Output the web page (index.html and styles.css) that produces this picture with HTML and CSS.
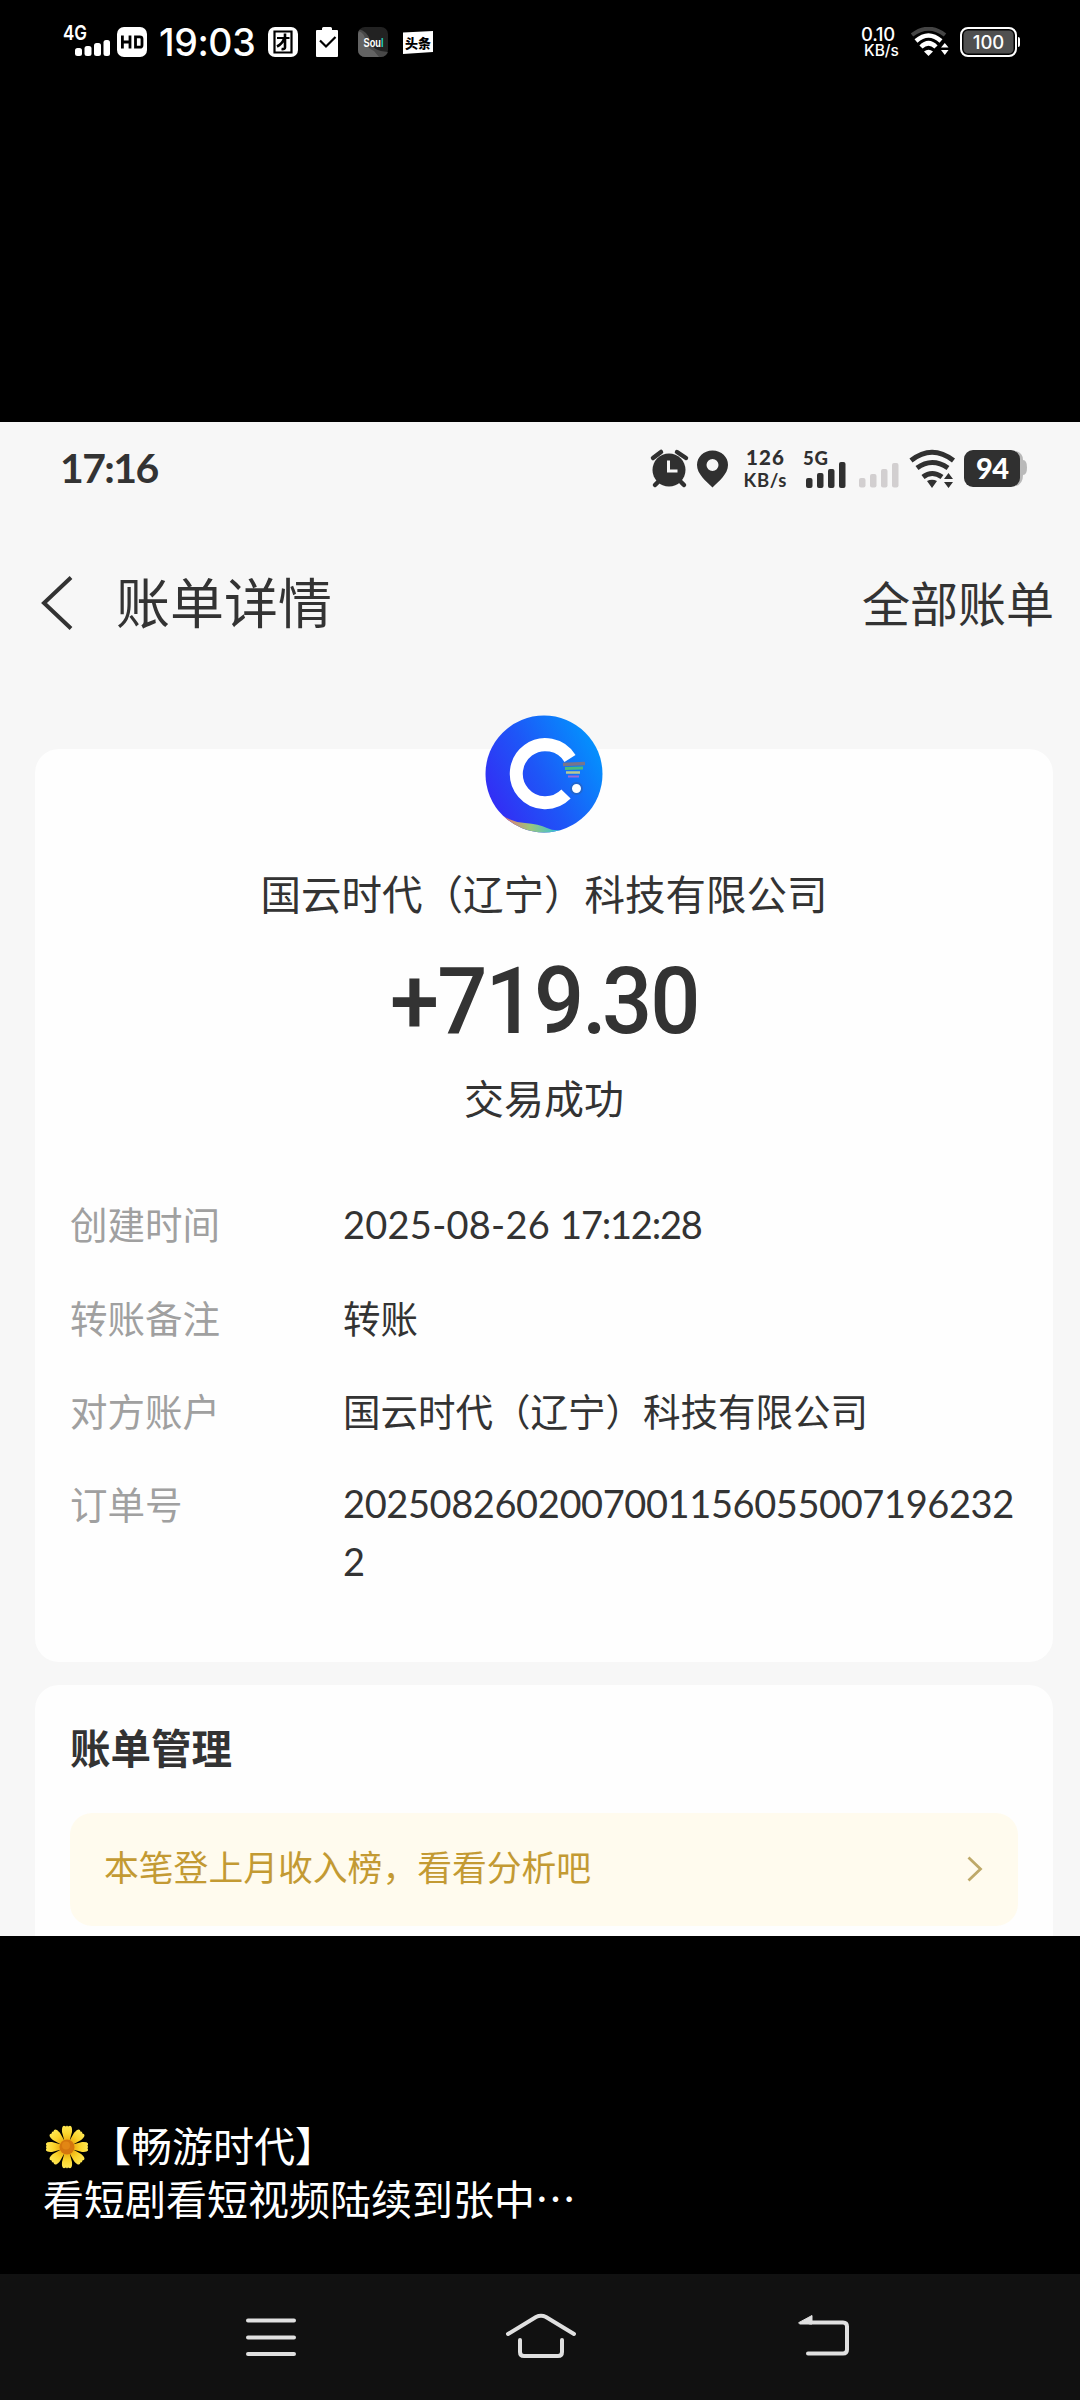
FILE: index.html
```html
<!DOCTYPE html>
<html lang="zh-CN">
<head>
<meta charset="utf-8">
<title>账单详情</title>
<link rel="stylesheet" href="styles.css">
</head>
<body>
<header class="status">
  <svg class="s-signal" width="50" height="40" viewBox="0 -4 50 40" fill="#fff">
    <text class="s-net" x="0" y="17" textLength="24" lengthAdjust="spacingAndGlyphs">4G</text>
    <rect x="12" y="25" width="7" height="8" rx="2.5"/><rect x="21.500" y="23" width="7" height="10" rx="2.500"/><rect x="31" y="20" width="7" height="13" rx="2.500"/><rect x="40.500" y="17" width="6.500" height="16" rx="2.500"/>
  </svg>
  <svg class="s-hd" width="30" height="30" viewBox="0 0 30 30"><rect width="30" height="30" rx="7" fill="#fff"/><g fill="none" stroke="#000" stroke-width="2.800"><path d="M5.400 8.500v13M13 8.500v13M5.400 15H13M18.500 9.800h4.300q2.200 0 2.200 2v6.400q0 2-2.200 2h-4.300z"/></g></svg>
  <span class="s-time">19:03</span>
  <svg class="s-tuan" width="30" height="30" viewBox="0 0 30 30"><rect width="30" height="30" rx="7" fill="#fff"/><g fill="none" stroke="#000" stroke-width="2.200"><path d="M6.500 4.500h17v21h-17zM9 11h12.500"/><path d="M17 6.500V20.500q0 2-3.500 1.500M16 12Q14 17 9 19.500" stroke-width="2.600"/></g></svg>
  <svg class="s-clip" width="22" height="30" viewBox="0 0 22 30"><path d="M1 3h5V1.500Q6 0 7.500 0h7Q16 0 16 1.500V3h5q1 0 1 1v25q0 1-1 1H1q-1 0-1-1V4q0-1 1-1z" fill="#fff"/><path d="M4 13.500l6 6 9.500-9.500" fill="none" stroke="#000" stroke-width="2.200"/></svg>
  <svg class="s-soul" width="30" height="30" viewBox="0 0 30 30">
    <defs><clipPath id="soul"><rect width="30" height="30" rx="7"/></clipPath></defs>
    <g clip-path="url(#soul)"><rect width="30" height="30" fill="#222"/><path d="M0 2Q10 4 12 14T30 25v5H0z" fill="#484848"/><path d="M0 4q7 2 7 9T16 24l5 6H0z" fill="#777" opacity=".6"/></g>
    <text class="s-soultext" x="5.500" y="20" fill="#fff" textLength="20" lengthAdjust="spacingAndGlyphs">Sou<tspan fill="#24dcc0">l</tspan></text>
  </svg>
  <svg class="s-toutiao" width="30" height="23" viewBox="0 0 30 23"><path d="M0 1.500L30 0v21L0 23z" fill="#fff"/><text class="s-tttext" x="2" y="17">头条</text></svg>
  <span class="s-rate"><span>0.10</span><span class="s-unit">KB/s</span></span>
  <svg class="s-wifi" width="38" height="30" viewBox="0 0 38 30" fill="none" stroke="#fff">
    <path d="M1 8Q17.500-4.500 34 8" stroke="#444" stroke-width="4"/>
    <path d="M5 14Q17.500 3 30 14" stroke-width="4.500"/><path d="M10 20Q17.500 12.500 25 20" stroke-width="4.500"/>
    <path d="M13 24.500Q17.500 21 22 24.500L17.500 29z" fill="#fff" stroke="none"/><path d="M30 20.500h7.500L33.800 16zM30 23h7.500l-3.700 5z" fill="#fff" stroke="none"/>
  </svg>
  <span class="s-batt">100</span><i class="s-nub"></i>
</header>

<main class="shot">
  <div class="bar">
    <span class="b-time">17:16</span>
    <svg class="b-icons" width="380" height="48" viewBox="648 443 380 48" fill="#303030">
      <circle cx="669" cy="470" r="16.500"/><path d="M653 458l8-6M677 452l9 6M658 482l-3 3M681 482l3 3" stroke="#303030" stroke-width="4.500" stroke-linecap="round"/><path d="M668.500 460.500v10.500h9" fill="none" stroke="#f7f7f7" stroke-width="3"/>
      <path fill-rule="evenodd" d="M712.500 450.500c9 0 15.500 6.500 15.500 14.500 0 9-9 16-15.500 22.500C706 481 697 474 697 465c0-8 6.500-14.500 15.500-14.500zm0 8.500a6 6 0 1 0 0 12 6 6 0 0 0 0-12z"/>
      <text class="b-rate" x="746" y="464.500" textLength="38">126</text><text class="b-unit" x="743.500" y="487" textLength="43">KB/s</text>
      <text class="b-net" x="803" y="465" textLength="25">5G</text>
      <rect x="806" y="478" width="6.500" height="10" rx="2"/><rect x="817" y="473" width="6.500" height="15" rx="2"/><rect x="828" y="469" width="6.500" height="19" rx="2"/><rect x="839" y="462" width="6.500" height="26" rx="2"/>
      <g fill="#d2cfd0"><rect x="859" y="478" width="6.500" height="9.500" rx="2"/><rect x="870" y="474" width="6.500" height="13.500" rx="2"/><rect x="881" y="469" width="6.500" height="18.500" rx="2"/><rect x="892" y="463" width="6.500" height="24.500" rx="2"/></g>
      <g fill="none" stroke="#303030" stroke-width="5"><path d="M911 460.500Q932 444 953.500 460.500M917 468Q932 457 948 468M923 477Q932 470 942 477"/></g>
      <path d="M927 481q5-2.500 10 0l-5 7zM944 479h9l-4.500-6zM944 482h9l-4.500 6z"/>
      <path d="M1016 451q7 2 7 9 4 0 4 7.500t-4 7.500q0 9-7 11z" fill="#b9b9b9"/><rect x="964" y="450" width="56" height="37" rx="9"/>
      <text class="b-level" x="976" y="478.500" textLength="33">94</text>
    </svg>
  </div>
  <div class="head">
    <svg width="32" height="54" viewBox="0 0 32 54"><path d="M30 1.500L3 27l27 25.500" fill="none" stroke="#333" stroke-width="4"/></svg>
    <h1 class="title">账单详情</h1>
    <a class="all">全部账单</a>
  </div>
  <section class="card pay">
    <svg class="logo" width="118" height="118" viewBox="0 0 118 118">
      <defs><linearGradient id="blue" x1="0" y1=".75" x2="1" y2=".2"><stop offset="0" stop-color="#3529f4"/><stop offset=".45" stop-color="#1e56f7"/><stop offset="1" stop-color="#0099fe"/></linearGradient>
      <linearGradient id="wave"><stop offset="0" stop-color="#f06a70"/><stop offset=".45" stop-color="#9cc67c"/><stop offset="1" stop-color="#13bdf4"/></linearGradient>
      <clipPath id="disc"><circle cx="59" cy="59" r="58.500"/></clipPath></defs>
      <g clip-path="url(#disc)"><rect width="118" height="118" fill="url(#blue)"/><path d="M15 99Q26 107 40 108t22 5 20 1v6H15z" fill="url(#wave)"/></g>
      <path d="M85 43.500A29 29 0 1 0 81 79" fill="none" stroke="#fff" stroke-width="13"/>
      <path d="M78 49.500l22-1" stroke="#77758c" stroke-width="3.500"/><path d="M80 53.500l18-.5" stroke="#48bb7e" stroke-width="3"/><path d="M81 57.500h14" stroke="#b7c994" stroke-width="2.500"/><path d="M83 61.500h11" stroke="#9a6bd6" stroke-width="2"/>
      <circle cx="91.500" cy="73.500" r="5.500" fill="#fff" stroke="#2166cf" stroke-width="2"/>
    </svg>
    <div class="company">国云时代（辽宁）科技有限公司</div>
    <div class="amount">+719<span class="dot">.</span>30</div>
    <div class="result">交易成功</div>
    <dl class="rows">
      <dt>创建时间</dt><dd><span class="date">2025-08-26 </span><span class="clock">17:12:28</span></dd>
      <dt>转账备注</dt><dd>转账</dd>
      <dt>对方账户</dt><dd>国云时代（辽宁）科技有限公司</dd>
      <dt>订单号</dt><dd class="order">20250826020070011560550071962322</dd>
    </dl>
  </section>
  <section class="card manage">
    <h2 class="subtitle">账单管理</h2>
    <div class="tip"><span>本笔登上月收入榜，看看分析吧</span>
      <svg width="16" height="28" viewBox="0 0 16 28"><path d="M1.500 2.500L13.500 14 1.500 25.500" fill="none" stroke="#bea969" stroke-width="2.800"/></svg>
    </div>
  </section>
</main>

<section class="caption">
  <div class="line">
    <svg class="flower" width="42" height="44" viewBox="0 0 42 44">
      <defs><radialGradient id="petal" gradientUnits="userSpaceOnUse" cx="21" cy="22" r="22"><stop offset=".25" stop-color="#eba90d"/><stop offset=".6" stop-color="#fbd42b"/><stop offset="1" stop-color="#ffe957"/></radialGradient></defs>
      <g fill="url(#petal)"><path id="p" d="M19 18L16 7Q15.500 1.200 18 .8l2 .8 1-1 1 1 2-.8q2.500.4 2 6.200L23 18z"/><use href="#p" transform="rotate(45 21 22)"/><use href="#p" transform="rotate(90 21 22)"/><use href="#p" transform="rotate(135 21 22)"/><use href="#p" transform="rotate(180 21 22)"/><use href="#p" transform="rotate(225 21 22)"/><use href="#p" transform="rotate(270 21 22)"/><use href="#p" transform="rotate(315 21 22)"/></g>
      <circle cx="21" cy="22" r="7.500" fill="#d5760e"/><circle cx="20" cy="20.500" r="4" fill="#e28614"/>
    </svg>
    <span>【畅游时代】</span>
  </div>
  <div class="line">看短剧看短视频陆续到张中…</div>
</section>

<nav class="nav">
  <svg width="80" height="60" viewBox="231 2307 80 60"><path d="M248 2320.500h46M248 2337.500h46M248 2354h46"/></svg>
  <svg width="80" height="60" viewBox="501 2307 80 60"><path d="M508 2334l28-17q5-2.500 10 0l28 17M520 2340v12q0 4 4 4h34q4 0 4-4v-12"/></svg>
  <svg class="back" width="80" height="60" viewBox="786 2307 80 60"><path d="M810 2322.500h33q4 0 4 4v23q0 4-4 4h-35"/><path class="solid" d="M799 2322.500l13-7v8.500h-12z"/></svg>
</nav>
</body>
</html>
```
FILE: styles.css
```css
* { box-sizing: border-box; }
body {
  margin: 0;
  width: 1080px;
  height: 2400px;
  background: #000;
  display: flex;
  flex-direction: column;
  overflow: hidden;
  font-family: "Noto Sans CJK SC", sans-serif;
  color: #fff;
}
svg { display: block; flex: none; }

/* phone status bar */
.status { height: 422px; flex: none; padding: 27px 60px 0 63px; display: flex; align-items: flex-start; }
.s-signal { margin: -8px 4px 0 0; }
.s-net { font: 600 20.500px Inter, sans-serif; }
.s-time { font: 500 37.500px/30px Inter, sans-serif; width: 96px; margin: 1px 0 0 12px; letter-spacing: -.4px; white-space: nowrap; }
.s-tuan { margin-left: 13px; }
.s-clip { margin-left: 18px; }
.s-soul { margin-left: 20px; }
.s-soultext { font: 700 13px "Liberation Sans", sans-serif; }
.s-toutiao { margin: 4px 0 0 15px; }
.s-tttext { font: 900 13px "Noto Sans CJK SC", sans-serif; fill: #000; }
.s-rate { margin: -2px 12px 0 auto; width: 38px; font: 500 18.500px/18px Inter, sans-serif; display: flex; flex-direction: column; letter-spacing: -.3px; }
.s-unit { font-size: 15.500px; line-height: 16px; padding-left: 3px; letter-spacing: 0; }
.s-wifi { margin: 0 11px 0 0; }
.s-batt { width: 57px; height: 30px; border: 2px solid #fff; border-radius: 8px; background: #505050; box-shadow: inset 0 0 0 1.500px #000; font: 500 18.500px/27px Inter, sans-serif; text-align: center; }
.s-nub { width: 2px; height: 10px; margin: 10px 0 0 1px; background: #fff; border-radius: 0 2px 2px 0; }

/* bill page */
.shot { height: 1514px; flex: none; overflow: hidden; background: #f7f7f7; color: #333; padding: 0 27px 0 35px; }
.bar { height: 92px; padding: 21px 25px 0 25px; display: flex; justify-content: space-between; }
.b-time { margin-top: 4px; font: 700 41px/42px Lato, sans-serif; letter-spacing: -1.600px; }
.b-rate { font: 900 20.500px Lato, sans-serif; }
.b-unit { font: 700 18.500px Lato, sans-serif; }
.b-net { font: 900 18.500px Lato, sans-serif; }
.b-level { font: 900 29px Lato, sans-serif; fill: #fff; }
.head { height: 235px; margin: 0 0 0 6px; padding-top: 36px; display: flex; align-items: flex-start; }
.head svg { margin-top: 26px; }
.title { margin: 12px 0 0 43px; font-size: 54px; line-height: 78px; font-weight: 400; }
.all { margin: 15px -1px 0 auto; font-size: 48px; line-height: 72px; }
.card { background: #fefefe; border-radius: 24px; padding: 0 35px; }
.pay { height: 913px; display: flex; flex-direction: column; align-items: center; }
.logo { margin-top: -34px; }
.company { margin-top: 34px; font-size: 40.500px; line-height: 52px; }
.amount { height: 104px; margin-top: 31px; font: 500 93px/104px Roboto, sans-serif; letter-spacing: -2px; transform: scaleX(.95); }
.dot { letter-spacing: -5px; }
.result { margin-top: 13px; font-size: 40px; line-height: 60px; }
.rows { width: 100%; margin: 67px 0 0; display: grid; grid-template-columns: 273px 1fr; row-gap: 35px; font-size: 37.500px; line-height: 58px; }
.rows dt { color: #a0a0a0; }
.rows dd { margin: 0; }
.date, .clock, .order { font-family: Lato, sans-serif; font-size: 38px; white-space: pre; }
.date { letter-spacing: .25px; }
.clock { letter-spacing: -1.200px; }
.rows .order { width: 680px; white-space: normal; overflow-wrap: anywhere; letter-spacing: -.4px; }
.manage { margin-top: 23px; height: 300px; }
.subtitle { margin: 0; padding-top: 32px; font-size: 40.500px; line-height: 60px; font-weight: 700; }
.tip { height: 113px; margin-top: 36px; padding: 0 35px 0 34px; border-radius: 22px; background: #fffbee; color: #c39a33; font-size: 34.800px; display: flex; align-items: center; justify-content: space-between; }
.tip span { line-height: 50px; margin-bottom: 7px; }
.tip svg { margin-bottom: 2px; }

/* image caption */
.caption { height: 338px; flex: none; padding: 182px 43px 0; font-size: 41px; line-height: 53px; }
.line { display: flex; height: 53px; }
.flower { margin: 7px 2px 0 3px; }

/* system navigation */
.nav { height: 126px; flex: none; background: #111; display: flex; gap: 190px; padding: 33px 0 0 231px; }
.nav .back { margin-left: 15px; }
.nav path { fill: none; stroke: #e0e0e0; stroke-width: 4; stroke-linecap: round; }
.nav .solid { fill: #e0e0e0; stroke-width: 1; }
```
